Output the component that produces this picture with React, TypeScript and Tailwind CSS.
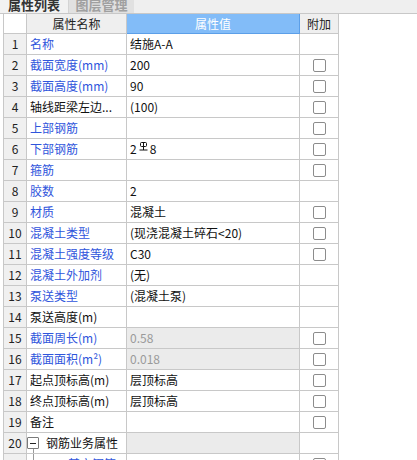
import React from "react";

type Row = {
  n: number;
  name: React.ReactNode;
  blue?: boolean;
  value?: React.ReactNode;
  cb?: boolean;
  grey?: boolean;
  tree?: "minus" | "child";
};

const Rebar = () => (
  <svg width="9" height="9" viewBox="0 0 9 9" className="inline-block align-top mt-[2px] mx-[2px]">
    <rect x="1.5" y="0.5" width="6" height="4" rx="1" fill="none" stroke="#111" strokeWidth="1" />
    <line x1="4.5" y1="0" x2="4.5" y2="8" stroke="#111" strokeWidth="1" />
    <line x1="0.5" y1="8" x2="8.5" y2="8" stroke="#111" strokeWidth="1" />
  </svg>
);

const rows: Row[] = [
  { n: 1, name: "名称", blue: true, value: "结施A-A" },
  { n: 2, name: "截面宽度(mm)", blue: true, value: "200", cb: true },
  { n: 3, name: "截面高度(mm)", blue: true, value: "90", cb: true },
  { n: 4, name: "轴线距梁左边...", value: "(100)", cb: true },
  { n: 5, name: "上部钢筋", blue: true, value: "", cb: true },
  {
    n: 6,
    name: "下部钢筋",
    blue: true,
    value: (
      <span>
        2<Rebar />8
      </span>
    ),
    cb: true,
  },
  { n: 7, name: "箍筋", blue: true, value: "", cb: true },
  { n: 8, name: "胶数", blue: true, value: "2" },
  { n: 9, name: "材质", blue: true, value: "混凝土", cb: true },
  { n: 10, name: "混凝土类型", blue: true, value: "(现浇混凝土碎石<20)", cb: true },
  { n: 11, name: "混凝土强度等级", blue: true, value: "C30", cb: true },
  { n: 12, name: "混凝土外加剂", blue: true, value: "(无)" },
  { n: 13, name: "泵送类型", blue: true, value: "(混凝土泵)" },
  { n: 14, name: "泵送高度(m)", value: "" },
  { n: 15, name: "截面周长(m)", blue: true, value: "0.58", cb: true, grey: true },
  { n: 16, name: "截面面积(m²)", blue: true, value: "0.018", cb: true, grey: true },
  { n: 17, name: "起点顶标高(m)", value: "层顶标高", cb: true },
  { n: 18, name: "终点顶标高(m)", value: "层顶标高", cb: true },
  { n: 19, name: "备注", value: "", cb: true },
  { n: 20, name: "钢筋业务属性", value: "", grey: true, tree: "minus" },
  { n: 21, name: "其它钢筋", blue: true, value: "", cb: true, tree: "child" },
];

const Checkbox = () => (
  <div className="w-[13px] h-[13px] border border-[#8c8c8c] rounded-[2px] bg-white" />
);

export default function App() {
  return (
    <div
      className="w-[417px] h-[460px] overflow-hidden bg-white text-[12px] text-[#111]"
      style={{ fontFamily: '"Noto Sans CJK SC", "Noto Sans", sans-serif' }}
    >
      {/* tab bar */}
      <div className="h-[14px] flex bg-[#efefef] border-b border-[#c8c8c8] overflow-hidden">
        <div className="w-[68px] bg-[#f2f2f2] flex justify-center">
          <span className="-mt-[3px] leading-[16px] text-[13px] font-bold text-[#333]">属性列表</span>
        </div>
        <div className="w-[66px] bg-[#e1e1e1] border-l border-[#d4d4d4] flex justify-center">
          <span className="-mt-[3px] leading-[16px] text-[13px] font-bold text-[#a0a0a0]">图层管理</span>
        </div>
        <div className="flex-1" />
      </div>

      {/* table */}
      <div className="ml-[3px] w-[336px] border-l border-[#c8c8c8]">
        {/* header */}
        <div className="grid grid-cols-[23px_100px_173px_39px] h-[20px]">
          <div className="bg-white border-r border-b border-[#c8c8c8]" />
          <div className="bg-[#efefef] border-r border-b border-[#c8c8c8] flex items-center justify-center text-[#222]">
            属性名称
          </div>
          <div className="bg-[#82bcf8] border-r border-b border-[#5c9fe8] flex items-center justify-center text-white">
            属性值
          </div>
          <div className="bg-[#efefef] border-r border-b border-[#c8c8c8] flex items-center justify-center text-[#222]">
            附加
          </div>
        </div>

        {rows.map((r) => (
          <div key={r.n} className="grid grid-cols-[23px_100px_173px_39px] h-[21px]">
            <div className="bg-[#f0f0f0] border-r border-b border-[#c8c8c8] flex items-center justify-center text-[#222]">
              {r.n}
            </div>
            <div
              className={
                "relative border-r border-b border-[#c8c8c8] flex items-center overflow-hidden " +
                (r.tree ? "pl-0" : "pl-[3px]")
              }
            >
              {r.tree === "minus" && (
                <>
                  <div className="w-[12px] h-[12px] border border-[#7a7a7a] rounded-[1px] bg-white flex items-center justify-center mr-[7px] shrink-0">
                    <div className="w-[6px] h-[1px] bg-[#222]" />
                  </div>
                  <div className="absolute left-[6px] top-[16px] h-[5px] w-px bg-[#9a9a9a]" />
                </>
              )}
              {r.tree === "child" && (
                <>
                  <div className="absolute left-[6px] top-0 h-[10px] w-px bg-[#9a9a9a]" />
                  <div className="absolute left-[6px] top-[10px] w-[30px] h-px bg-[#9a9a9a]" />
                  <div className="w-[41px] shrink-0" />
                </>
              )}
              <span
                className={
                  "whitespace-nowrap overflow-hidden " +
                  (r.blue ? "text-[#2f55dc]" : "text-[#111]")
                }
              >
                {r.name}
              </span>
            </div>
            <div
              className={
                "border-r border-b border-[#c8c8c8] flex items-center pl-[3px] whitespace-nowrap overflow-hidden " +
                (r.grey ? "bg-[#ebebeb] text-[#9a9a9a]" : "bg-white text-[#111]")
              }
            >
              {r.value}
            </div>
            <div className="border-r border-b border-[#c8c8c8] flex items-center justify-center">
              {r.cb && <Checkbox />}
            </div>
          </div>
        ))}
      </div>
    </div>
  );
}
